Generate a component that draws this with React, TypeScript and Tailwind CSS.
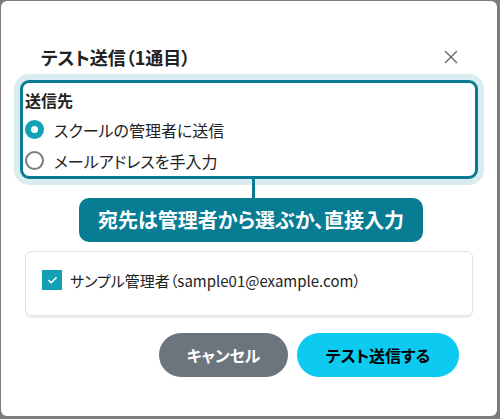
import { X, Check } from "lucide-react";

const FONT = { fontFamily: '"Noto Sans CJK JP", "Noto Sans", sans-serif' };
const PALT = { fontFeatureSettings: '"palt"' };

function Radio({ checked, label }: { checked: boolean; label: string }) {
  return (
    <label className="flex h-[31px] items-center gap-[10px]">
      {checked ? (
        <span className="grid size-[19px] place-items-center rounded-full bg-[#13a0b4]">
          <span className="size-[7px] rounded-full bg-white" />
        </span>
      ) : (
        <span className="size-[19px] rounded-full border-2 border-[#7b7b7b] bg-white" />
      )}
      <span className="text-[16px] leading-[24px] text-[#222]" style={PALT}>
        {label}
      </span>
    </label>
  );
}

export default function App() {
  return (
    <div className="h-[419px] w-[500px] bg-[#7c7c7c] pl-[1px] pt-[1px]" style={FONT}>
      <div className="flex h-[415px] w-[496px] flex-col rounded-[6px] bg-white">
        <div className="mt-[42px] flex items-center justify-between pl-[40px] pr-[35px]">
          <h2 className="text-[18px] leading-[28px] font-bold text-[#222]" style={PALT}>
            テスト送信（1通目）
          </h2>
          <X className="size-[22px] text-[#6b6b6b]" strokeWidth={1.6} />
        </div>

        <div className="mx-[19px] mt-[9px] rounded-[9px] border-[3px] border-[#0a7b92] px-[2px] pt-[5px] shadow-[0_0_0_6px_#d9ecf0]">
          <div className="h-[24px] text-[16px] leading-[24px] font-bold text-[#222]" style={PALT}>
            送信先
          </div>
          <div className="mt-[2px]">
            <Radio checked label="スクールの管理者に送信" />
            <Radio checked={false} label="メールアドレスを手入力" />
          </div>
        </div>

        <div className="ml-[251px] h-[19px] w-[3px] bg-[#0a7b92]" />
        <div className="ml-[78px] flex h-[44px] w-[344px] items-center justify-center rounded-[10px] bg-[#077c93]">
          <span className="text-[20px] font-bold text-white" style={PALT}>
            宛先は管理者から選ぶか、直接入力
          </span>
        </div>

        <div className="mx-[24px] mt-[9px] flex h-[65px] items-start gap-[8px] rounded-[6px] border border-[#e2e2e2] pl-[16px] pt-[18px] shadow-[0_2px_0_#eef0f2]">
          <span className="grid size-[20px] place-items-center bg-[#13a0b4]">
            <Check className="size-[11px] text-white" strokeWidth={3.5} />
          </span>
          <span className="text-[15px] leading-[22px] text-[#222]" style={PALT}>
            サンプル管理者（sample01@example.com）
          </span>
        </div>

        <div className="mt-[17px] flex justify-end gap-[9px] pr-[38px]">
          <button className="h-[44px] w-[129px] rounded-full bg-[#6c757d] text-[16px] font-bold text-white" style={PALT}>
            キャンセル
          </button>
          <button className="h-[44px] w-[162px] rounded-full bg-[#0dcaf0] text-[16px] font-bold text-black" style={PALT}>
            テスト送信する
          </button>
        </div>
      </div>
    </div>
  );
}
